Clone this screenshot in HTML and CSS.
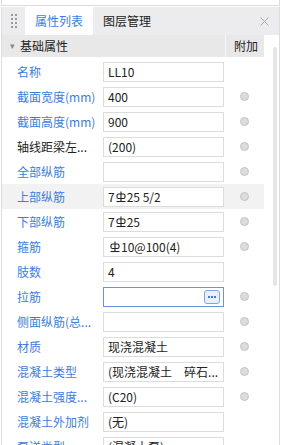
FILE: index.html
```html
<!DOCTYPE html>
<html lang="zh-CN">
<head>
    <meta charset="UTF-8">
    <title>属性列表</title>
    <link rel="stylesheet" href="styles.css">
</head>
<body>
    <div class="top-strip"></div>

    <div class="panel">
        <div class="tab-bar">
            <div class="grip">
                <span></span><span></span><span></span><span></span>
                <span></span><span></span><span></span><span></span>
            </div>
            <div class="tab active">属性列表</div>
            <div class="tab">图层管理</div>
            <div class="close"><svg viewBox="0 0 9 9"><line x1="0.5" y1="0.5" x2="8.5" y2="8.5"/><line x1="8.5" y1="0.5" x2="0.5" y2="8.5"/></svg></div>
        </div>

        <div class="body">
            <div class="grid">
                <div class="section">
                    <div class="section-title"><span class="caret">▾</span>基础属性</div>
                    <div class="section-extra">附加</div>
                </div>

                <div class="rows">
                    <div class="row">
                        <div class="label">名称</div>
                        <div class="value">LL10</div>
                        <div class="extra"></div>
                    </div>
                    <div class="row">
                        <div class="label">截面宽度(mm)</div>
                        <div class="value">400</div>
                        <div class="extra"><span class="dot"></span></div>
                    </div>
                    <div class="row">
                        <div class="label">截面高度(mm)</div>
                        <div class="value">900</div>
                        <div class="extra"><span class="dot"></span></div>
                    </div>
                    <div class="row">
                        <div class="label plain">轴线距梁左...</div>
                        <div class="value">(200)</div>
                        <div class="extra"><span class="dot"></span></div>
                    </div>
                    <div class="row">
                        <div class="label">全部纵筋</div>
                        <div class="value"></div>
                        <div class="extra"><span class="dot"></span></div>
                    </div>
                    <div class="row selected">
                        <div class="label">上部纵筋</div>
                        <div class="value">7<svg class="bar" viewBox="0 0 10 12"><rect x="1" y="3" width="8" height="4.5" rx="1.5"/><line x1="5" y1="0.5" x2="5" y2="10.5"/><line x1="0.5" y1="10.5" x2="9.5" y2="10.5"/></svg>25 5/2</div>
                        <div class="extra"><span class="dot"></span></div>
                    </div>
                    <div class="row">
                        <div class="label">下部纵筋</div>
                        <div class="value">7<svg class="bar" viewBox="0 0 10 12"><rect x="1" y="3" width="8" height="4.5" rx="1.5"/><line x1="5" y1="0.5" x2="5" y2="10.5"/><line x1="0.5" y1="10.5" x2="9.5" y2="10.5"/></svg>25</div>
                        <div class="extra"><span class="dot"></span></div>
                    </div>
                    <div class="row">
                        <div class="label">箍筋</div>
                        <div class="value"><svg class="bar first" viewBox="0 0 10 12"><rect x="1" y="3" width="8" height="4.5" rx="1.5"/><line x1="5" y1="0.5" x2="5" y2="10.5"/><line x1="0.5" y1="10.5" x2="9.5" y2="10.5"/></svg>10@100(4)</div>
                        <div class="extra"><span class="dot"></span></div>
                    </div>
                    <div class="row">
                        <div class="label">肢数</div>
                        <div class="value">4</div>
                        <div class="extra"></div>
                    </div>
                    <div class="row">
                        <div class="label">拉筋</div>
                        <div class="value focused"><span class="more"><i></i><i></i><i></i></span></div>
                        <div class="extra"><span class="dot"></span></div>
                    </div>
                    <div class="row">
                        <div class="label">侧面纵筋(总...</div>
                        <div class="value"></div>
                        <div class="extra"><span class="dot"></span></div>
                    </div>
                    <div class="row">
                        <div class="label">材质</div>
                        <div class="value">现浇混凝土</div>
                        <div class="extra"><span class="dot"></span></div>
                    </div>
                    <div class="row">
                        <div class="label">混凝土类型</div>
                        <div class="value">(现浇混凝土　碎石...</div>
                        <div class="extra"><span class="dot"></span></div>
                    </div>
                    <div class="row">
                        <div class="label">混凝土强度...</div>
                        <div class="value">(C20)</div>
                        <div class="extra"><span class="dot"></span></div>
                    </div>
                    <div class="row">
                        <div class="label">混凝土外加剂</div>
                        <div class="value">(无)</div>
                        <div class="extra"></div>
                    </div>
                    <div class="row">
                        <div class="label">泵送类型</div>
                        <div class="value">(混凝土泵)</div>
                        <div class="extra"></div>
                    </div>
                </div>
            </div>

            <div class="scroll">
                <div class="thumb"></div>
            </div>
        </div>
    </div>
</body>
</html>
```

FILE: styles.css
```css
body {
    margin: 0;
    width: 282px;
    height: 445px;
    overflow: hidden;
    background-color: #fff;
    font-family: "Noto Sans CJK SC", "Noto Sans", sans-serif;
    font-size: 12px;
    color: #333;
}

.top-strip {
    height: 5px;
    margin: 0 2px 0 1px;
    border: 1px solid #dcdcdc;
    border-top: none;
}

.panel {
    margin: 1px 2px 0 1px;
    border-left: 1px solid #dcdcdc;
    border-right: 1px solid #dcdcdc;
    height: 440px;
}

.tab-bar {
    display: flex;
    align-items: stretch;
    height: 28px;
    background-color: #ececee;
}

.grip {
    display: grid;
    grid-template-columns: 2px 2px;
    grid-auto-rows: 2px;
    column-gap: 2px;
    row-gap: 2px;
    align-content: center;
    padding: 0 8px 0 9px;
}

.grip span {
    background-color: #9a9a9a;
}

.tab {
    display: flex;
    align-items: center;
    padding: 0 10px 0 10px;
    line-height: 28px;
    color: #222;
}

.tab.active {
    background-color: #fff;
    color: #3b7ddd;
}

.close {
    margin-left: auto;
    padding-right: 10px;
    display: flex;
    align-items: center;
}

.close svg {
    width: 9px;
    height: 9px;
    stroke: #a8a8a8;
    stroke-width: 1;
}

.body {
    display: flex;
}

.grid {
    width: 262px;
}

.section {
    display: flex;
    height: 22px;
    line-height: 22px;
    background-color: #e8e8e8;
}

.section-title {
    width: 223px;
    border-right: 1px solid #f6f6f6;
    color: #222;
}

.caret {
    display: inline-block;
    width: 10px;
    margin: 0 0 0 8px;
    font-size: 9px;
    color: #888;
    vertical-align: top;
}

.section-extra {
    flex: 1;
    padding-left: 8px;
    color: #222;
}

.rows {
    padding-top: 2px;
}

.row {
    display: flex;
    height: 25px;
    align-items: flex-start;
}

.row.selected {
    background-color: #f2f2f2;
}

.label {
    width: 86px;
    padding-left: 15px;
    line-height: 25px;
    color: #3b7ddd;
    white-space: nowrap;
}

.label.plain {
    color: #222;
}

.value {
    position: relative;
    box-sizing: border-box;
    width: 121px;
    height: 20px;
    margin-top: 3px;
    padding-left: 4px;
    border: 1px solid #dcdcdc;
    background-color: #fff;
    line-height: 18px;
    color: #222;
    white-space: nowrap;
    overflow: hidden;
}

.value.focused {
    border-color: #6a93d8;
}

.bar {
    width: 10px;
    height: 12px;
    margin: 0 1px;
    vertical-align: -1px;
    fill: none;
    stroke: #222;
    stroke-width: 1.1;
}

.bar.first {
    margin-left: 2px;
}

.more {
    position: absolute;
    right: 3px;
    top: 2px;
    box-sizing: border-box;
    width: 16px;
    height: 14px;
    border: 1px solid #7aa6e6;
    border-radius: 3px;
    background-color: #e7f0fc;
    display: flex;
    justify-content: center;
    align-items: center;
    gap: 1px;
}

.more i {
    width: 2px;
    height: 2px;
    background-color: #3b7ddd;
}

.extra {
    flex: 1;
    display: flex;
    justify-content: center;
    padding-top: 8px;
}

.dot {
    box-sizing: border-box;
    width: 9px;
    height: 9px;
    border-radius: 50%;
    border: 1px solid #c4c4c4;
    background-color: #dcdcdc;
}

.scroll {
    flex: 1;
}

.thumb {
    width: 4px;
    height: 239px;
    margin: 12px 0 0 9px;
    border-radius: 2px;
    background-color: #e6e6e6;
}
```
